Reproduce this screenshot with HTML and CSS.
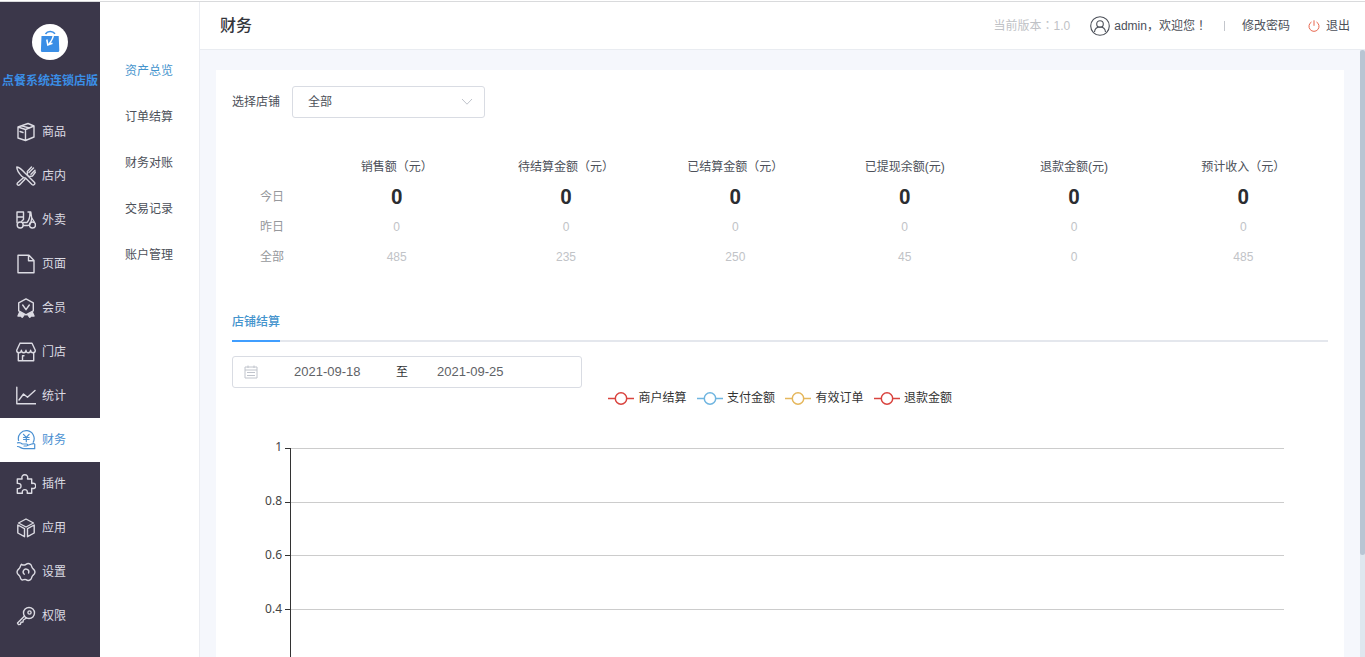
FILE: index.html
```html
<!DOCTYPE html>
<html lang="zh-CN">
<head>
<meta charset="utf-8">
<title>财务</title>
<link rel="stylesheet" href="styles.css">
</head>
<body>
<div class="app">
  <aside class="sidebar">
    <div class="logo">
      <svg width="36" height="36" viewBox="0 0 36 36"><circle cx="18" cy="18" r="18" fill="#fff"/><path d="M9.500 12h17.200l.6 14.500q0 1.500-1.500 1.500H10.300Q8.800 28 8.900 26.500z" fill="#3a8ee6"/><path d="M13.500 10c2-3 7-3.500 9.500-.2" fill="none" stroke="#3a8ee6" stroke-width="1.500"/><path d="M21.300 11.500c-.3 3.500-2 5.500-4.300 8.500M14.800 15.500l1 5.500 4.700-1.800" fill="none" stroke="#fff" stroke-width="1.500"/></svg>
    </div>
    <div class="brand">点餐系统连锁店版</div>
    <nav class="nav">
      <a class="nav-item"><svg class="icon" viewBox="0 0 20 20"><path d="M2 5l10-3.500L18 4v11l-8.500 3.500L2 16zM2 5l7.500 2.500L18 4M9.500 7.500v11M5.500 3.800l8 2.200M4 9.500l3 1"/></svg>商品</a>
      <a class="nav-item"><svg class="icon" viewBox="0 0 20 20"><path d="M.8 1c3 .4 5 2.300 8.200 6l9.300 9.300c1.500 1.700-.8 3.600-2.300 2.200L9.500 12c-1.600.2-2.400-.4-3.500-1.600C3 7.500.8 4.300.8 1zM7.700 11.500l-6 5.200c-1.600 1.500.5 3.600 2 2l5.200-5.500M11.500 9l-.2-3.500L15.500 1M13 6.500L17.500 2M15 8.200l4-4M11.500 9l1.500 1.500 3.500-.5 3-4"/></svg>店内</a>
      <a class="nav-item"><svg class="icon" viewBox="0 0 20 20"><path d="M1 2h6.500v5H1zM1 7v5.500M7.500 7v2.500l-1.800 1.700M12 2h2.800l.8 5.500 2.700 4.500M14 2.500c0 5-.5 7.500-3 10H7.300M7.300 15.500h4.500c2 0 3.500-3 3.800-7"/><circle cx="4.200" cy="15" r="3"/><circle cx="16.500" cy="15" r="3"/></svg>外卖</a>
      <a class="nav-item"><svg class="icon" viewBox="0 0 20 20"><path d="M2 1.200h11l5 5.300v12.300H2zM12.500 1.500v5.300h5"/></svg>页面</a>
      <a class="nav-item"><svg class="icon" viewBox="0 0 20 20"><path d="M10 .9l7.300 3.900v8L10 16.900l-7.300-4.100v-8zM6.700 7l3.300 4.700L13.300 7"/><path d="M3.500 14.500L2 18l2.900-.3 1.300 1.600 2-2.500zM16.500 14.500L18 18l-2.900-.3-1.300 1.600-2-2.500z" fill="currentColor"/></svg>会员</a>
      <a class="nav-item"><svg class="icon" viewBox="0 0 20 20"><path d="M4 1.300h12l3.300 7c0 3.300-4.600 3.300-4.700 0 0 3.300-4.600 3.300-4.600 0 0 3.300-4.600 3.300-4.600 0C5.300 11.600.7 11.600.7 8.300M4 1.300L.7 8.300M2.300 11v7.800h15.400V11M6.500 18.500v-4.700H8"/></svg>门店</a>
      <a class="nav-item"><svg class="icon" viewBox="0 0 20 20"><path d="M.8 1.200v16.600h19M3 14l4.500-6 4 3.200 7.500-6.700"/></svg>统计</a>
      <a class="nav-item active"><svg class="icon finance" viewBox="0 0 20 20"><path d="M2.600 10.500A7.900 7.900 0 1 1 17.200 12.300M7.500 4.300l2.800 3 2.800-3M7.500 7.500h5.600M7.500 9.500h5.600M10.300 7.500v4.200M1.500 12.800c1.700-.5 3.300-.2 4.800 1.200h4.200c1.800.2 1.600 2 0 2H8M12 15.300l4.500-1.500c2-.5 2.500.2 2.200 1.500v3.400H8c-3 0-3.500-2-6.500-2.200"/></svg>财务</a>
      <a class="nav-item"><svg class="icon" viewBox="0 0 20 20"><path d="M1.300 5h4.800C5.300 2.300 6.800.8 8.800.8s3.500 1.500 2.700 4.200h4.200v4.500c2.500-.8 4 .5 4 2.400s-1.500 3.200-4 2.400v4.900h-4.500c.5-2.700-.8-3.600-2.400-3.600s-2.900.9-2.400 3.600H1.300v-4.600c3 .3 3.700-1 3.700-2.600s-.7-2.900-3.700-2.600z"/></svg>插件</a>
      <a class="nav-item"><svg class="icon" viewBox="0 0 20 20"><path d="M10 1l7.500 4L10 9 2.500 5zM1.800 7l6.700 3.700v8L1.800 15zM18.200 7l-6.700 3.700v8l6.700-3.700z"/></svg>应用</a>
      <a class="nav-item"><svg class="icon" viewBox="0 0 20 20"><path d="M5.500 2.300c1.500 1 3 1 4.500 0s3-1 4.500 0 .8 3 2.300 4.200 2.200 1.700 2.200 3.500-.7 2.300-2.200 3.500-.8 3.200-2.300 4.200-3 1-4.500 0-3 1-4.500 0-.8-3-2.300-4.200S1 11.800 1 10s.7-2.300 2.200-3.500.8-3.200 2.300-4.200z"/><path d="M8.300 12.200a2.800 2.800 0 1 1 4.300-1.200"/></svg>设置</a>
      <a class="nav-item"><svg class="icon" viewBox="0 0 20 20"><circle cx="13" cy="7" r="5.500"/><circle cx="13.500" cy="6.500" r="1.600"/><path d="M8.500 10l-7 7 1 1.500 2-.3.500-2 2-.2.300-2 3.200-2"/></svg>权限</a>
    </nav>
  </aside>
  <nav class="submenu">
    <a class="sub-item current">资产总览</a>
    <a class="sub-item">订单结算</a>
    <a class="sub-item">财务对账</a>
    <a class="sub-item">交易记录</a>
    <a class="sub-item">账户管理</a>
  </nav>
  <section class="content">
    <header class="header">
      <h1>财务</h1>
      <div class="user-bar">
        <span class="version">当前版本<span class="mid" lang="zh-TW">：</span>1.0</span>
        <svg class="avatar" width="20" height="20" viewBox="0 0 20 20"><circle cx="10" cy="10" r="9.300"/><circle cx="10" cy="8" r="3.300"/><path d="M4.500 16c.3-3 2-5 5.500-5s5.200 2 5.500 5"/></svg>
        <span class="welcome">admin，欢迎您<span class="mid" lang="zh-TW">！</span></span>
        <span class="divider"></span>
        <a class="password">修改密码</a>
        <svg class="power" width="12" height="12" viewBox="0 0 12 12"><path d="M3.500 2A5 5 0 1 0 8.500 2M6 .3v5.500"/></svg>
        <a>退出</a>
      </div>
    </header>
    <div class="viewport">
      <main class="card">
        <div class="filter">
          <span>选择店铺</span>
          <div class="select"><span>全部</span><svg width="12" height="8" viewBox="0 0 12 8"><path d="M1 1l5 5.200L11 1"/></svg></div>
        </div>
        <div class="stats">
          <span></span><span class="wide">销售额（元）</span><span class="wide">待结算金额（元）</span><span class="wide">已结算金额（元）</span><span>已提现余额(元)</span><span>退款金额(元)</span><span class="wide">预计收入（元）</span>
          <span class="label">今日</span><b>0</b><b>0</b><b>0</b><b>0</b><b>0</b><b>0</b>
          <span class="label">昨日</span><i>0</i><i>0</i><i>0</i><i>0</i><i>0</i><i>0</i>
          <span class="label">全部</span><i>485</i><i>235</i><i>250</i><i>45</i><i>0</i><i>485</i>
        </div>
        <div class="tabs"><span class="tab">店铺结算</span></div>
        <div class="date-range">
          <svg width="14" height="14" viewBox="0 0 14 14"><path d="M1 2h12v11H1zM1 5h12M4 .5v2.500M10 .5v2.500M3 7.500h8M3 10.500h8" /></svg>
          <span class="date">2021-09-18</span><span class="to">至</span><span class="date-end">2021-09-25</span>
        </div>
        <div class="legend">
          <span class="key red"><svg width="26" height="14"><path d="M0 7.500h26"/><circle cx="13" cy="7.500" r="5.700"/></svg>商户结算</span>
          <span class="key blue"><svg width="26" height="14"><path d="M0 7.500h26"/><circle cx="13" cy="7.500" r="5.700"/></svg>支付金额</span>
          <span class="key gold"><svg width="26" height="14"><path d="M0 7.500h26"/><circle cx="13" cy="7.500" r="5.700"/></svg>有效订单</span>
          <span class="key red"><svg width="26" height="14"><path d="M0 7.500h26"/><circle cx="13" cy="7.500" r="5.700"/></svg>退款金额</span>
        </div>
        <svg class="chart" width="1096" height="250" viewBox="0 0 1096 250">
          <path class="grid" d="M59 40.500h993M59 94.500h993M59 147.500h993M59 201.500h993"/>
          <path class="axis" d="M58.500 40v210M53 40.500h5M53 94.500h5M53 147.500h5M53 201.500h5"/>
          <g class="ticks"><text x="50" y="43">1</text><text x="50" y="97">0.8</text><text x="50" y="151">0.6</text><text x="50" y="205">0.4</text></g>
        </svg>
      </main>
      <div class="scrollbar"><div class="thumb"></div></div>
    </div>
  </section>
</div>
</body>
</html>
```
FILE: styles.css
```css
* { box-sizing: border-box; }
body {
  margin: 0;
  padding-top: 1px;
  height: 657px;
  overflow: hidden;
  background: #fff;
  color: #4c5059;
  font: 12px/20px "Liberation Sans", "Noto Sans CJK SC", sans-serif;
}
svg { flex: none; }
.app { display: flex; height: 656px; border-top: 1px solid #d9dadc; }

.sidebar { width: 100px; flex: none; background: #3b374a; }
.logo { display: flex; justify-content: center; padding-top: 22px; }
.brand { margin-top: 11px; height: 39px; text-align: center; font-weight: bold; color: #3a8ee6; white-space: nowrap; }
.nav-item { display: flex; align-items: center; gap: 6px; height: 44px; padding-left: 16px; color: #dcdbe3; }
.icon { width: 20px; height: 20px; fill: none; stroke: currentColor; stroke-width: 1.4; stroke-linejoin: round; stroke-linecap: round; }
.icon.finance { stroke-width: 1.2; }
.nav-item.active { background: #fff; color: #4a90d2; }

.submenu { width: 100px; flex: none; padding-top: 46px; border-right: 1px solid #ebedf2; }
.sub-item { display: flex; align-items: center; height: 46px; padding-left: 25px; }
.sub-item.current { color: #4594cd; }

.content { flex: 1; min-width: 0; display: flex; flex-direction: column; }
.header { flex: none; display: flex; justify-content: space-between; align-items: center; height: 48px; padding: 0 15px 0 20px; border-bottom: 1px solid #e9ecf1; }
h1 { margin: 0; font-size: 16px; font-weight: 500; color: #33353b; }
.user-bar { display: flex; align-items: center; }
.version { color: #c0c2c6; }
.mid { font-family: "Noto Sans CJK TC", sans-serif; line-height: 1; }
.avatar { margin: 0 4px 0 20px; fill: none; stroke: #4c5059; stroke-width: 1.1; }
.divider { width: 1px; height: 10px; margin: 0 17px; background: #c3c6cc; }
.power { margin: 1px 6px 0 18px; fill: none; stroke: #e8674f; }

.viewport { flex: 1; min-height: 0; display: flex; background: #f5f7fc; overflow: hidden; }
.card { width: 1128px; flex: none; margin: 20px 16px 0; padding: 16px; background: #fff; }
.filter { display: flex; align-items: center; gap: 12px; height: 32px; }
.select { display: flex; align-items: center; justify-content: space-between; width: 193px; height: 32px; padding: 0 11px 0 15px; border: 1px solid #d9dce3; border-radius: 3px; }
.select svg { fill: none; stroke: #c0c4cc; }
.stats { display: grid; grid-template-columns: 80px repeat(6, 1fr); grid-auto-rows: 30px; align-items: center; text-align: center; margin-top: 34px; }
.stats .label { color: #96989c; }
.stats b { font-family: Roboto, sans-serif; font-size: 20px; color: #2b2d31; }
.stats i { font-style: normal; color: #c1c3c7; }
.tabs { display: flex; height: 40px; margin-top: 30px; border-bottom: 2px solid #e4e7ed; }
.tab { height: 40px; line-height: 40px; border-bottom: 2px solid #409eff; color: #4594cd; font-weight: 500; }
.date-range { display: flex; align-items: center; width: 350px; height: 32px; margin-top: 14px; padding-left: 11px; border: 1px solid #d9dce3; border-radius: 3px; font-size: 13px; color: #606266; }
.date-range svg { fill: none; stroke: #c0c4cc; }
.date { width: 138px; padding-left: 36px; }
.to { width: 41px; font-size: 12px; color: #303133; }
.legend { display: flex; gap: 10px; height: 20px; margin-left: 376px; color: #333; }
.key { display: flex; align-items: center; gap: 4.500px; }
.key svg { fill: #fff; stroke-width: 1.500; }
.red svg { stroke: #d9443f; }
.blue svg { stroke: #6fb5e0; }
.gold svg { stroke: #e5b75c; }
.chart { display: block; }
.grid { stroke: #ccc; }
.axis { stroke: #333; fill: none; }
.ticks { font: 12px "Noto Sans", sans-serif; fill: #444; text-anchor: end; }
.scrollbar { width: 5px; flex: none; background: #dfe7ef; }
.thumb { height: 505px; border-radius: 3px; background: #b9c5d3; }
```
